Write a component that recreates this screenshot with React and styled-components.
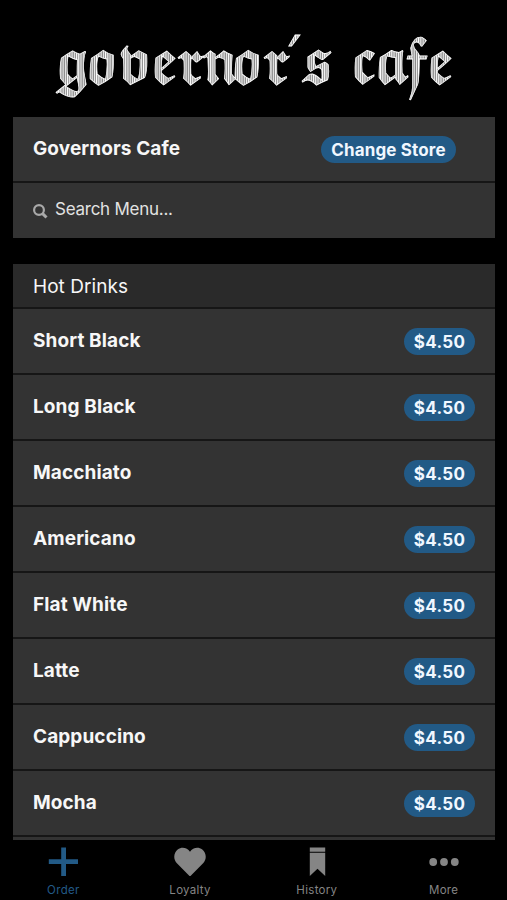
import React from "react";
import styled, { createGlobalStyle } from "styled-components";

const GlobalStyle = createGlobalStyle`
  * {
    box-sizing: border-box;
  }
  body {
    margin: 0;
    background: #000;
    font-family: Inter, "Liberation Sans", sans-serif;
  }
`;

const Screen = styled.div`
  display: flex;
  flex-direction: column;
  width: 507px;
  height: 900px;
  overflow: hidden;
  color: #f7f7f7;
  background: #000;
`;

const Header = styled.header`
  flex: none;
  height: 117px;
  & svg {
    display: block;
  }
`;

const Content = styled.main`
  flex: 1;
  min-height: 0;
  overflow: hidden;
  padding: 0 12px 0 13px;
`;

const Panel = styled.section`
  display: flex;
  flex-direction: column;
  gap: 2px;
  background: #161616;
  margin-bottom: 26px;
`;

const Row = styled.div`
  display: flex;
  flex: none;
  align-items: center;
  justify-content: space-between;
  height: ${(props) => props.$height || 64}px;
  padding: 0 ${(props) => props.$right || 20}px 0 20px;
  background: #333;
`;

const SectionTitle = styled.div`
  height: 43px;
  padding-left: 20px;
  font-size: 19px;
  line-height: 45px;
  letter-spacing: 0.05px;
  background: #2a2a2a;
`;

const Name = styled.div`
  font-size: 19px;
  font-weight: 700;
  line-height: 24px;
  letter-spacing: 0.1px;
`;

const Pill = styled.div`
  width: ${(props) => props.$width || 71}px;
  height: 27px;
  margin-top: 1px;
  border-radius: 14px;
  font-size: 17px;
  font-weight: 700;
  line-height: 28px;
  letter-spacing: ${(props) => props.$spacing || 0}px;
  text-align: center;
  color: #f0f7ff;
  background: #225a86;
`;

const Search = styled.div`
  display: flex;
  align-items: center;
  gap: 7px;
  padding-bottom: 3px;
  font-size: 17px;
  letter-spacing: -0.25px;
  color: #e2e2e2;
  & svg {
    margin-top: 4px;
  }
`;

const TabBar = styled.nav`
  display: grid;
  grid-template-columns: repeat(4, 1fr);
  flex: none;
  height: 60px;
  background: #000;
`;

const Tab = styled.div`
  display: flex;
  flex-direction: column;
  align-items: center;
  padding-top: 6px;
  font-size: 11.5px;
  line-height: 15px;
  letter-spacing: 0.3px;
  color: ${(props) => (props.$active ? "#225a86" : "#858585")};
  & svg {
    margin-bottom: 7px;
  }
`;

const drinks = [
  "Short Black",
  "Long Black",
  "Macchiato",
  "Americano",
  "Flat White",
  "Latte",
  "Cappuccino",
  "Mocha",
];

// the blackletter face is wide, so every letter is condensed on its own origin
const letters = [
  ["𝖌", 52],
  ["𝖔", 86],
  ["𝖛", 117],
  ["𝖊", 151],
  ["𝖗", 174],
  ["𝖓", 199],
  ["𝖔", 231],
  ["𝖗", 260],
  ["´", 279],
  ["𝖘", 298],
  [" ", 330],
  ["𝖈", 351],
  ["𝖆", 375],
  ["𝖋", 403],
  ["𝖊", 427],
];
const condense = 0.86;

const Logo = () => (
  <svg width="507" height="117" role="img" aria-label="governor's cafe">
    <defs>
      <pattern id="hatch" width="2.6" height="2" patternUnits="userSpaceOnUse">
        <rect width="2.6" height="2" fill="#888" />
        <rect width="1.2" height="2" fill="#fff" />
      </pattern>
    </defs>
    <text
      x={letters.map(([, x]) => x / condense).join(" ")}
      y="83.5"
      transform={`scale(${condense} 1)`}
      fontFamily='"DejaVu Math TeX Gyre", "DejaVu Serif", serif'
      fontSize="59"
      fill="url(#hatch)"
      stroke="#fff"
      strokeWidth="0.8"
    >
      {letters.map(([char]) => char).join("")}
    </text>
  </svg>
);

const SearchIcon = () => (
  <svg width="15" height="15" viewBox="0 0 15 15" fill="none" stroke="#a9a9a9">
    <circle cx="6" cy="6" r="4.9" strokeWidth="2.2" />
    <path d="M9.6 9.6L13.5 13.5" strokeWidth="3" />
  </svg>
);

const PlusIcon = () => (
  <svg width="30" height="30" viewBox="0 0 30 30" fill="currentColor">
    <path d="M13.2 1.5H18v11.8h12v4.8H18v12h-4.8v-12H.8v-4.8h12.4z" />
  </svg>
);

const HeartIcon = () => (
  <svg width="32" height="30" viewBox="0 0 32 30" fill="currentColor">
    <path d="M16 30.500L2.900 17.200C-1.200 12.800-.2 6.600 3.700 3.500c4-3.200 9.500-2 12.300 2.300C18.800 1.500 24.300.3 28.300 3.500c3.900 3.100 4.900 9.300.8 13.700z" />
  </svg>
);

const HistoryIcon = () => (
  <svg width="30" height="30" viewBox="0 0 30 30" fill="currentColor">
    <path d="M7.800 1.500h15.400v4.300H7.800zM7.800 6.800h15.400V30l-7.700-7.200L7.800 30z" />
  </svg>
);

const MoreIcon = () => (
  <svg width="30" height="30" viewBox="0 0 30 30" fill="currentColor">
    <circle cx="4.2" cy="16" r="3.9" />
    <circle cx="15" cy="16" r="3.9" />
    <circle cx="25.8" cy="16" r="3.9" />
  </svg>
);

const tabs = [
  { label: "Order", icon: PlusIcon },
  { label: "Loyalty", icon: HeartIcon },
  { label: "History", icon: HistoryIcon },
  { label: "More", icon: MoreIcon },
];

const App = () => {
  return (
    <>
      <GlobalStyle />
      <Screen>
        <Header>
          <Logo />
        </Header>
        <Content>
          <Panel>
            <Row $right={39}>
              <Name>Governors Cafe</Name>
              <Pill $width={135} $spacing={0.15}>
                Change Store
              </Pill>
            </Row>
            <Row $height={55}>
              <Search>
                <SearchIcon />
                <div>Search Menu...</div>
              </Search>
            </Row>
          </Panel>
          <Panel>
            <SectionTitle>Hot Drinks</SectionTitle>
            {drinks.map((name) => (
              <Row key={name}>
                <Name>{name}</Name>
                <Pill $spacing={0.3}>$4.50</Pill>
              </Row>
            ))}
            <Row />
          </Panel>
        </Content>
        <TabBar>
          {tabs.map(({ label, icon: Icon }, i) => (
            <Tab key={label} $active={i === 0}>
              <Icon />
              <div>{label}</div>
            </Tab>
          ))}
        </TabBar>
      </Screen>
    </>
  );
};

export default App;
